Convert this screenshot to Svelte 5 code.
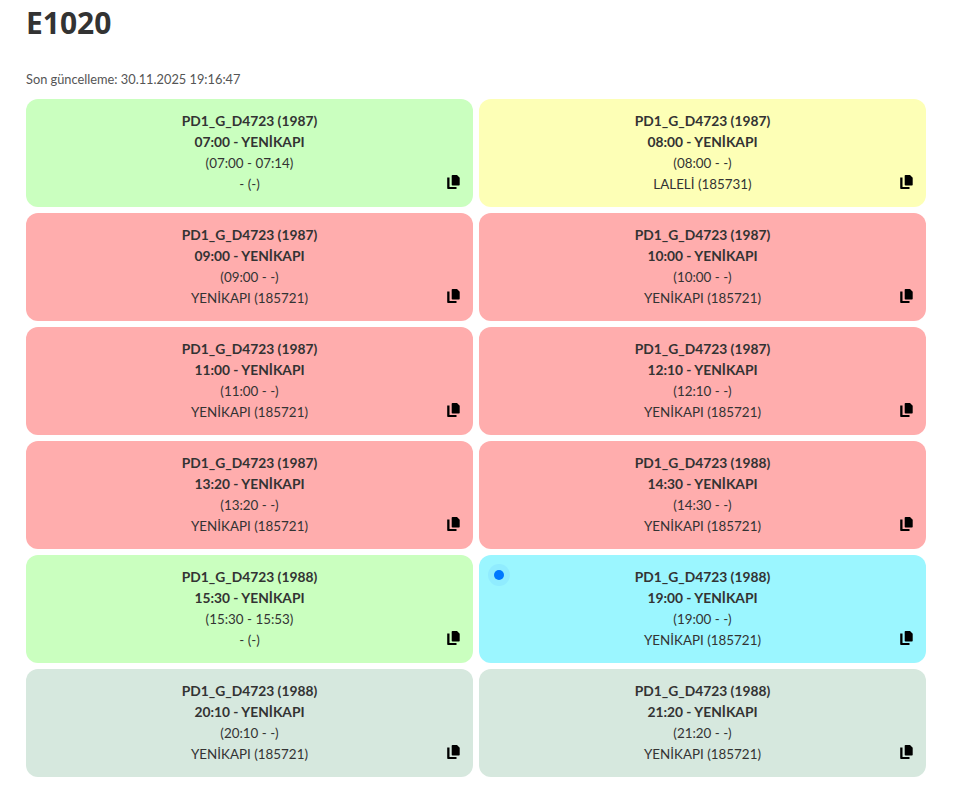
<script>
  const rows = [
    ['1987','07:00','(07:00 - 07:14)','- (-)','green'],
    ['1987','08:00','(08:00 - -)','LALELİ (185731)','yellow'],
    ['1987','09:00','(09:00 - -)','YENİKAPI (185721)','red'],
    ['1987','10:00','(10:00 - -)','YENİKAPI (185721)','red'],
    ['1987','11:00','(11:00 - -)','YENİKAPI (185721)','red'],
    ['1987','12:10','(12:10 - -)','YENİKAPI (185721)','red'],
    ['1987','13:20','(13:20 - -)','YENİKAPI (185721)','red'],
    ['1988','14:30','(14:30 - -)','YENİKAPI (185721)','red'],
    ['1988','15:30','(15:30 - 15:53)','- (-)','green'],
    ['1988','19:00','(19:00 - -)','YENİKAPI (185721)','cyan'],
    ['1988','20:10','(20:10 - -)','YENİKAPI (185721)','grey'],
    ['1988','21:20','(21:20 - -)','YENİKAPI (185721)','grey']
  ];
</script>

<main class="page">
  <h1>E1020</h1>
  <p class="updated">Son güncelleme: 30.11.2025 19:16:47</p>
  <div class="grid">
    {#each rows as r}
      <div class="card {r[4]}">
        {#if r[4] === 'cyan'}<span class="dot"></span>{/if}
        <div class="b">PD1_G_D4723 ({r[0]})</div>
        <div class="b">{r[1]} - YENİKAPI</div>
        <div class="r">{r[2]}</div>
        <div class="r">{r[3]}</div>
        <svg class="copy" viewBox="0 0 13 14" width="13" height="14">
          <path d="M5.500 0H10l2.700 2.700V9.700a.8.800 0 0 1-.8.800H5.500a.8.800 0 0 1-.8-.8V.8a.8.800 0 0 1 .8-.8z" fill="#000"/>
          <path d="M.2 2.500H2.500V11.900H9.500V14H1a.8.800 0 0 1-.8-.8z" fill="#000"/>
        </svg>
      </div>
    {/each}
  </div>
</main>

<style>
  :global(body) { margin: 0; background: #fff; }
  .page {
    padding: 0 30px 30px 26px;
    font-family: "Lato", "Noto Sans", sans-serif;
    color: #333;
  }
  h1 {
    margin: 0;
    padding: 5px 0 27px;
    font-family: "Noto Sans", sans-serif;
    font-size: 30px;
    line-height: 36px;
    font-weight: 700;
    color: #333;
  }
  .updated {
    margin: 0;
    height: 31px;
    font-size: 12.8px;
    line-height: 20px;
    color: #555;
    padding-top: 1px;
    box-sizing: border-box;
  }
  .grid {
    display: grid;
    grid-template-columns: 447px 447px;
    grid-auto-rows: 108px;
    gap: 6px;
  }
  .card {
    position: relative;
    border-radius: 12px;
    box-sizing: border-box;
    padding-top: 11px;
    text-align: center;
    line-height: 21px;
  }
  .b { font-weight: 700; font-size: 13.8px; }
  .r { font-size: 13.4px; position: relative; top: 1px; }
  .green { background: #caffbf; }
  .yellow { background: #fdffb6; }
  .red { background: #ffadad; }
  .cyan { background: #9bf6ff; }
  .grey { background: #d6e8de; }
  .copy { position: absolute; right: 13px; bottom: 18px; }
  .dot {
    position: absolute;
    left: 15px;
    top: 15px;
    width: 10px;
    height: 10px;
    border-radius: 50%;
    background: #0078ff;
    box-shadow: 0 0 0 6px rgba(0, 120, 255, 0.07);
  }
</style>
